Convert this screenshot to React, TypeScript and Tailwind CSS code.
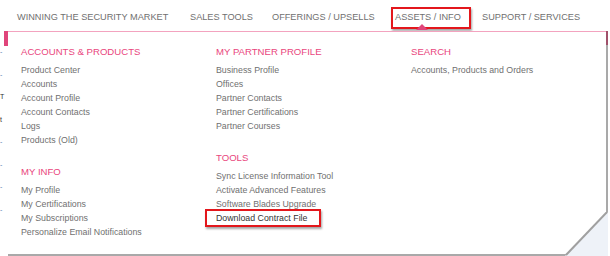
import React from "react"

const nav: { label: string; w: string }[] = [
  { label: "WINNING THE SECURITY MARKET", w: "w-[173px]" },
  { label: "SALES TOOLS", w: "w-[82px]" },
  { label: "OFFERINGS / UPSELLS", w: "w-[123px]" },
  { label: "ASSETS / INFO", w: "w-[87px]" },
  { label: "SUPPORT / SERVICES", w: "w-[110px]" },
]

const columns: { title: string; items: string[] }[][] = [
  [
    {
      title: "ACCOUNTS & PRODUCTS",
      items: ["Product Center", "Accounts", "Account Profile", "Account Contacts", "Logs", "Products (Old)"],
    },
    {
      title: "MY INFO",
      items: ["My Profile", "My Certifications", "My Subscriptions", "Personalize Email Notifications"],
    },
  ],
  [
    {
      title: "MY PARTNER PROFILE",
      items: ["Business Profile", "Offices", "Partner Contacts", "Partner Certifications", "Partner Courses"],
    },
    {
      title: "TOOLS",
      items: ["Sync License Information Tool", "Activate Advanced Features", "Software Blades Upgrade", "Download Contract File"],
    },
  ],
  [{ title: "SEARCH", items: ["Accounts, Products and Orders"] }],
]

function Group({ title, items }: { title: string; items: string[] }) {
  return (
    <div className="mb-[18px]">
      <div className="h-[14px] leading-[14px] text-[9.6px] text-[#e9467d] mb-[4px]">{title}</div>
      {items.map((it) =>
        it === "Download Contract File" ? (
          <div key={it} className="relative h-[14px] leading-[14px]">
            <span className="text-[#333]">{it}</span>
            <div className="absolute left-[-11px] top-[-2px] w-[116px] h-[18px] border-2 border-[#e3171c] shadow-[1px_2px_2px_rgba(0,0,0,0.35)]" />
          </div>
        ) : (
          <div key={it} className="h-[14px] leading-[14px]">
            {it}
          </div>
        )
      )}
    </div>
  )
}

export default function App() {
  return (
    <div className="w-[610px] h-[256px] bg-white overflow-hidden relative font-['Liberation_Sans',Arial,sans-serif]">
      <div className="h-[31px] flex items-center pl-[17px] pt-[3px] text-[9.2px] text-[#707070] whitespace-nowrap">
        {nav.map((n, i) => (
          <div key={n.label} className={`relative shrink-0 leading-[14px] ${n.w}`}>
            {n.label}
            {i === 3 && (
              <>
                <div className="absolute left-[-4px] top-[-3px] w-[80px] h-[22px] border-2 border-[#e3171c] shadow-[1px_2px_2px_rgba(0,0,0,0.35)]" />
                <div className="absolute z-10 left-[21px] top-[14px] w-0 h-0 border-l-[6px] border-r-[6px] border-b-[6px] border-l-transparent border-r-transparent border-b-[#e0457b]" />
              </>
            )}
          </div>
        ))}
      </div>
      <div className="flex h-[225px]">
        <div className="w-[8px] flex flex-col items-start pt-[16px] gap-[12px] text-[7px] text-[#5a7bb0]">
          <span>-</span>
          <span>-</span>
          <span className="text-[#333]">T</span>
          <span className="text-[#333]">t</span>
          <span>-</span>
          <span>-</span>
          <span>-</span>
          <span>-</span>
        </div>
        <div className="relative flex-1 mr-[2px] border-t border-[#f3a3bf] border-b-2 border-b-[#a9a9a9] border-r-2 border-r-[#a9a9a9] bg-white text-[8.8px] text-[#707070]">
          <div className="absolute left-[-4px] top-[-1px] w-[4px] h-[15px] bg-[#e0457b]" />
          <div className="absolute right-[-2px] top-[-1px] w-[2px] h-[14px] bg-[#a0506a]" />
          <div className="flex pl-[13px] pt-[13px]">
            {columns.map((col, i) => (
              <div key={i} className="w-[195px]">
                {col.map((g) => (
                  <Group key={g.title} {...g} />
                ))}
              </div>
            ))}
          </div>
          <svg className="absolute right-[-2px] bottom-[-2px]" width="43" height="44" viewBox="0 0 43 44">
            <polygon points="43,0 43,44 0,44" fill="#eef2f8" />
            <line x1="42" y1="0" x2="1" y2="43" stroke="#a0a0a0" strokeWidth="2" />
          </svg>
        </div>
      </div>
    </div>
  )
}
